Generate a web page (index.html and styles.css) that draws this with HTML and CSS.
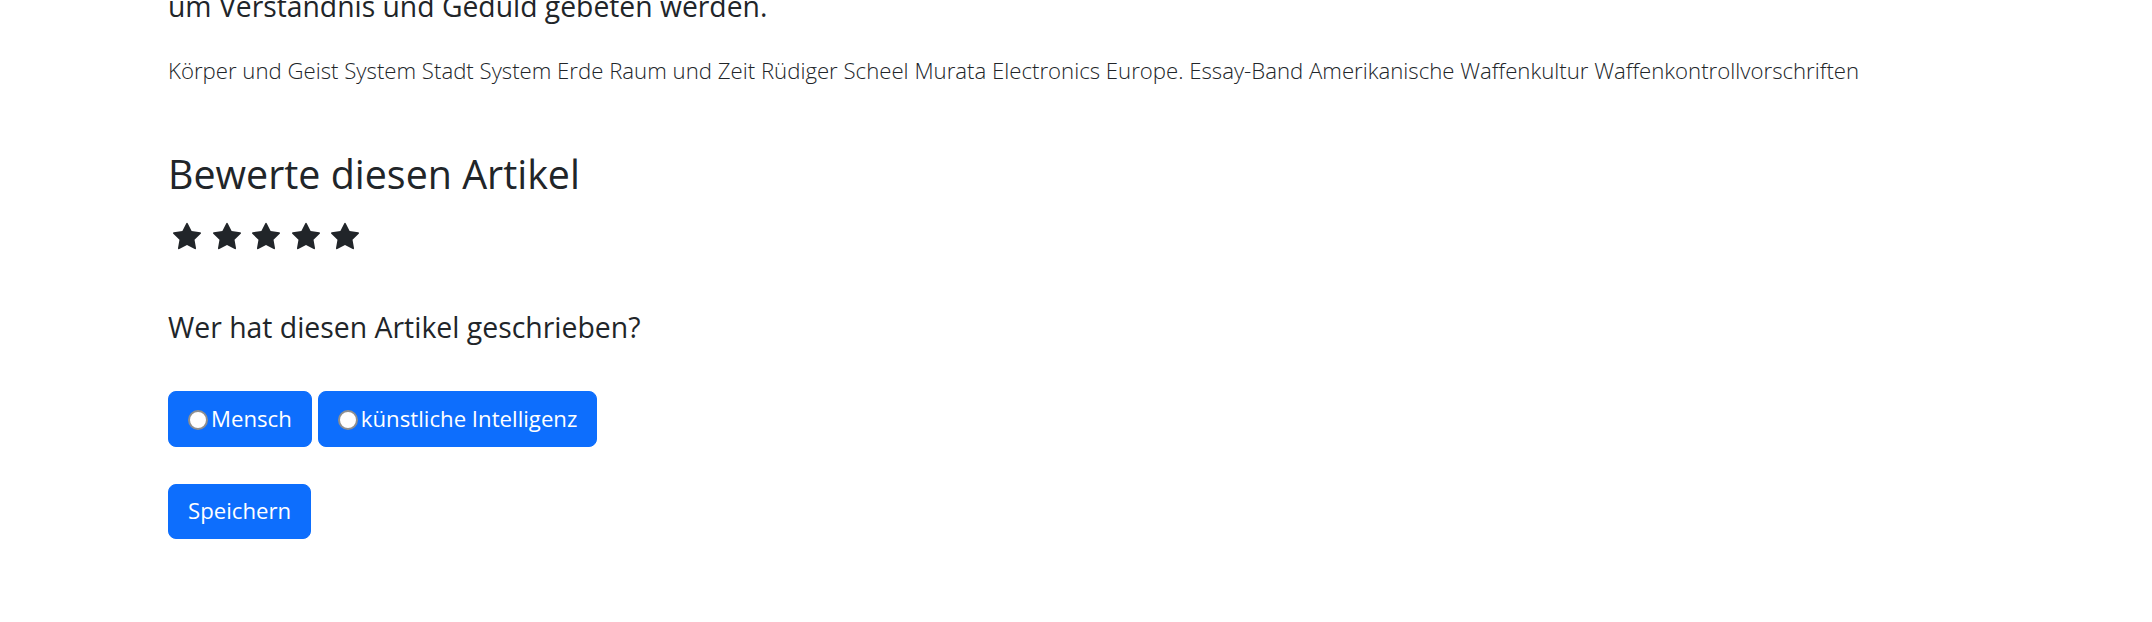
FILE: index.html
```html
<!DOCTYPE html>
<html lang="de">
<head>
<meta charset="utf-8">
<title>Artikel</title>
<link rel="stylesheet" href="styles.css">
</head>
<body>
<main class="article">
  <p class="article-end">um Verständnis und Geduld gebeten werden.</p>
  <p class="tags">Körper und Geist System Stadt System Erde Raum und Zeit Rüdiger Scheel Murata Electronics Europe. Essay-Band Amerikanische Waffenkultur Waffenkontrollvorschriften</p>

  <section class="rating">
    <h3 class="rating-title">Bewerte diesen Artikel</h3>
    <div class="stars">
      <svg class="star" viewBox="0 0 16 16"><path d="M3.612 15.443c-.386.198-.824-.149-.746-.592l.83-4.73L.173 6.765c-.329-.314-.158-.888.283-.95l4.898-.696L7.538.792c.197-.39.73-.39.927 0l2.184 4.327 4.898.696c.441.062.612.636.282.95l-3.522 3.356.83 4.73c.078.443-.36.79-.746.592L8 13.187l-4.389 2.256z"/></svg>
      <svg class="star" viewBox="0 0 16 16"><path d="M3.612 15.443c-.386.198-.824-.149-.746-.592l.83-4.73L.173 6.765c-.329-.314-.158-.888.283-.95l4.898-.696L7.538.792c.197-.39.73-.39.927 0l2.184 4.327 4.898.696c.441.062.612.636.282.95l-3.522 3.356.83 4.73c.078.443-.36.79-.746.592L8 13.187l-4.389 2.256z"/></svg>
      <svg class="star" viewBox="0 0 16 16"><path d="M3.612 15.443c-.386.198-.824-.149-.746-.592l.83-4.73L.173 6.765c-.329-.314-.158-.888.283-.95l4.898-.696L7.538.792c.197-.39.73-.39.927 0l2.184 4.327 4.898.696c.441.062.612.636.282.95l-3.522 3.356.83 4.73c.078.443-.36.79-.746.592L8 13.187l-4.389 2.256z"/></svg>
      <svg class="star" viewBox="0 0 16 16"><path d="M3.612 15.443c-.386.198-.824-.149-.746-.592l.83-4.73L.173 6.765c-.329-.314-.158-.888.283-.95l4.898-.696L7.538.792c.197-.39.73-.39.927 0l2.184 4.327 4.898.696c.441.062.612.636.282.95l-3.522 3.356.83 4.73c.078.443-.36.79-.746.592L8 13.187l-4.389 2.256z"/></svg>
      <svg class="star" viewBox="0 0 16 16"><path d="M3.612 15.443c-.386.198-.824-.149-.746-.592l.83-4.73L.173 6.765c-.329-.314-.158-.888.283-.95l4.898-.696L7.538.792c.197-.39.73-.39.927 0l2.184 4.327 4.898.696c.441.062.612.636.282.95l-3.522 3.356.83 4.73c.078.443-.36.79-.746.592L8 13.187l-4.389 2.256z"/></svg>
    </div>
  </section>

  <form class="author-poll">
    <p class="question">Wer hat diesen Artikel geschrieben?</p>
    <div class="choices">
      <label class="btn"><input class="radio" type="radio" name="author">Mensch</label>
      <label class="btn"><input class="radio" type="radio" name="author">künstliche Intelligenz</label>
    </div>
    <button class="btn save" type="button">Speichern</button>
  </form>
</main>
</body>
</html>
```
FILE: styles.css
```css
html, body {
  margin: 0;
  padding: 0;
  background: #ffffff;
}

body {
  font-family: "Open Sans", "Noto Sans", sans-serif;
  color: #212529;
  overflow: hidden;
}

.article {
  padding-left: 168px;
  display: flex;
  flex-direction: column;
  align-items: flex-start;
}

.article-end {
  margin: -12px 0 0 0;
  font-size: 28.3px;
  line-height: 36px;
  font-weight: 400;
  white-space: nowrap;
}

.tags {
  margin: 31px 0 0 0;
  font-size: 22.2px;
  line-height: 32px;
  font-weight: 300;
  white-space: nowrap;
}

.rating {
  margin-top: 63px;
}

.rating-title {
  margin: 0;
  font-size: 39.4px;
  line-height: 48px;
  font-weight: 400;
}

.stars {
  margin-top: 23.5px;
  padding-left: 5px;
  display: flex;
  gap: 11.6px;
}

.star {
  width: 28px;
  height: 28px;
  fill: #212529;
  display: block;
}

.author-poll {
  display: flex;
  flex-direction: column;
  align-items: flex-start;
}

.question {
  margin: 59px 0 0 0;
  font-size: 28.4px;
  line-height: 36px;
}

.choices {
  margin-top: 46px;
  display: flex;
  gap: 6px;
}

.btn {
  display: inline-flex;
  align-items: center;
  box-sizing: border-box;
  height: 56px;
  padding: 0 19px;
  border: 1px solid #0d6efd;
  border-radius: 8px;
  background: #0d6efd;
  color: #ffffff;
  font-family: "Open Sans", "Noto Sans", sans-serif;
  font-size: 22.2px;
  line-height: 34px;
  cursor: pointer;
}

.radio {
  appearance: none;
  -webkit-appearance: none;
  flex: none;
  width: 20px;
  height: 20px;
  margin: 3px 3px 0 0;
  border: 2.5px solid #8f8f8f;
  border-radius: 50%;
  background: #ffffff;
  box-sizing: border-box;
}

.save {
  margin-top: 37px;
  height: 55px;
}
```
